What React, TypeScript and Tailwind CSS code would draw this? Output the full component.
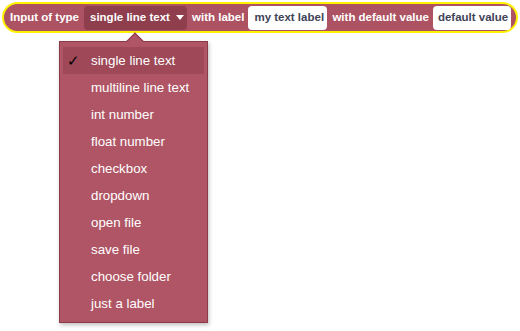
import { useState } from 'react';

const OPTIONS = [
  'single line text',
  'multiline line text',
  'int number',
  'float number',
  'checkbox',
  'dropdown',
  'open file',
  'save file',
  'choose folder',
  'just a label',
];

export default function App() {
  const [selected, setSelected] = useState(OPTIONS[0]);

  return (
    <div
      className="relative w-[520px] h-[331px] bg-white"
      style={{ fontFamily: '"Liberation Sans", Arial, sans-serif' }}
    >
      <div className="pt-[2px] pl-[2px]">
        <div className="inline-flex items-center h-[31px] rounded-full border-2 border-[#fff200] bg-[#ad5262] pl-[6px] pr-[5px] text-[11.5px] font-bold text-white">
          <span>Input of type</span>
          <div className="ml-[5px] flex items-center h-[24px] w-[103px] rounded-[4px] bg-[#8e3e4c] pl-[6px]">
            <span>{selected}</span>
            <span className="ml-[6px] w-0 h-0 border-l-[4px] border-r-[4px] border-t-[5px] border-l-transparent border-r-transparent border-t-white" />
          </div>
          <span className="ml-[5px]">with label</span>
          <div className="ml-[4px] flex items-center h-[24px] w-[79px] rounded-[4px] bg-white pl-[6px] text-[#3f4358]">
            my text label
          </div>
          <span className="ml-[5px]">with default value</span>
          <div className="ml-[4px] flex items-center h-[24px] w-[78px] rounded-[4px] bg-white pl-[5px] text-[#3f4358]">
            default value
          </div>
        </div>
      </div>

      {/* dropdown menu */}
      <div className="absolute left-[59px] top-[41px] w-[149px] h-[282px] border border-[#8a3a48] bg-[#b05565] shadow-[1px_2px_4px_rgba(0,0,0,0.25)]">
        <div className="absolute left-[69px] top-[-7px] w-[12px] h-[12px] rotate-45 border-l border-t border-[#8a3a48] bg-[#b05565]" />
        <div className="relative px-[3px] pt-[5px] flex flex-col">
          {OPTIONS.map((opt) => (
            <div
              key={opt}
              onClick={() => setSelected(opt)}
              className={
                opt === selected
                  ? 'flex items-center h-[27px] bg-[#9e4858] text-[13.3px] text-white'
                  : 'flex items-center h-[27px] text-[13.3px] text-white'
              }
            >
              <span className="w-[28px] pl-[4px] text-[15px] leading-none text-black">
                {opt === selected ? '✓' : ''}
              </span>
              <span>{opt}</span>
            </div>
          ))}
        </div>
      </div>
    </div>
  );
}
